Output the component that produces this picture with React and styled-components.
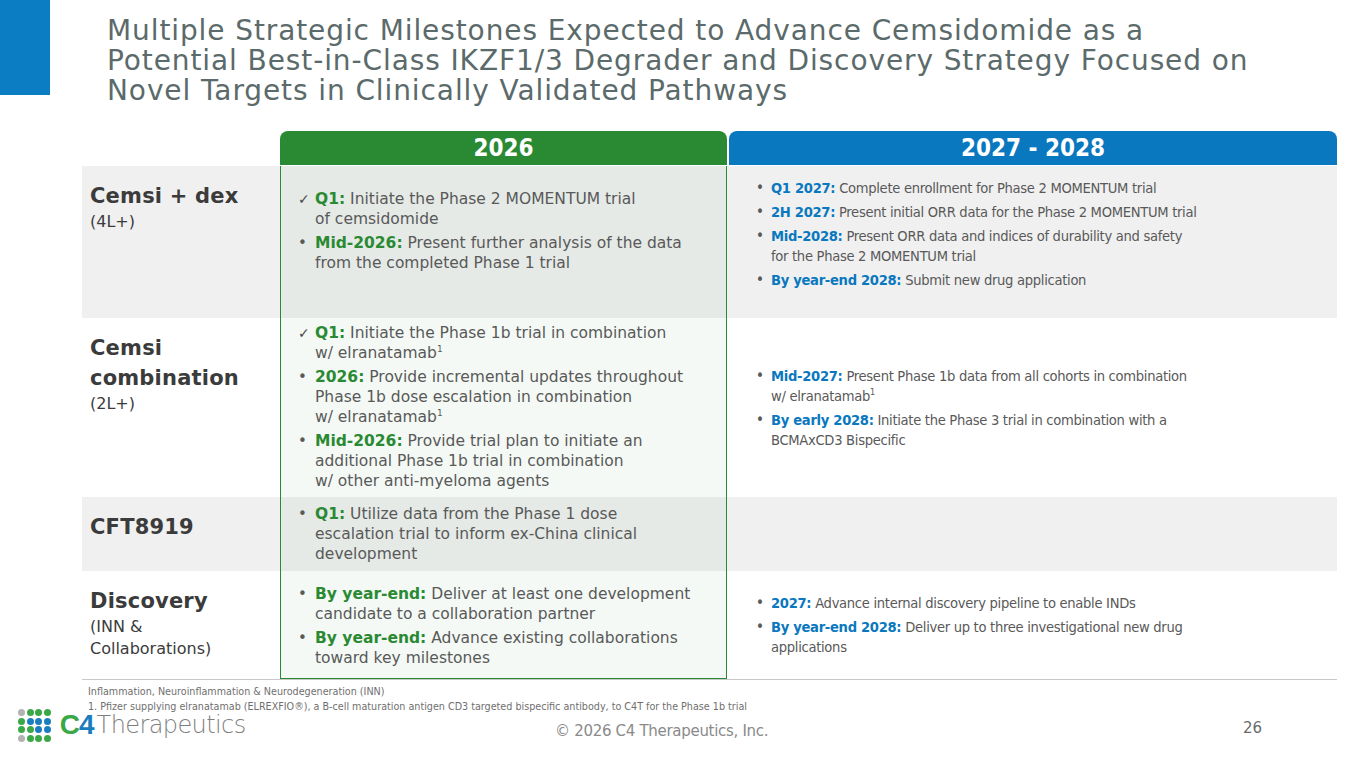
import React from 'react'
import styled, { createGlobalStyle } from 'styled-components'

const GREEN = '#2a8a33';
const BLUE = '#0a78bf';
const TEXT = '#595959';

const GlobalStyle = createGlobalStyle`
  html, body {
    margin: 0;
    padding: 0;
    background: #ffffff;
  }
  body {
    font-family: "DejaVu Sans", "Liberation Sans", sans-serif;
    color: ${TEXT};
  }
`;

const Slide = styled.div`
  width: 1365px;
  height: 768px;
  display: flex;
  flex-direction: column;
  overflow: hidden;
`;

const Header = styled.div`
  display: flex;
  align-items: flex-start;
  gap: 57px;
  height: 131px;
`;

const Tab = styled.div`
  width: 50px;
  height: 95px;
  background: #0b7dc2;
  flex: none;
`;

const Title = styled.h1`
  margin: 16px 0 0;
  font-weight: normal;
  font-size: 28px;
  line-height: 30px;
  color: #5b6a6a;
  letter-spacing: 0.9px;
  white-space: nowrap;
`;

const Table = styled.div`
  margin-left: 82px;
  width: 1255px;
  display: flex;
  flex-direction: column;
  border-bottom: 1px solid #c9c9c9;
`;

const Row = styled.div`
  display: grid;
  grid-template-columns: 198px 449px 608px;
  height: ${({ h }) => h}px;
  background: ${({ shade }) => (shade ? '#f0f0f0' : '#ffffff')};
`;

const YearHead = styled.div`
  display: flex;
  align-items: center;
  justify-content: center;
  height: 34px;
  margin-right: ${({ gapRight }) => (gapRight ? '2px' : '0')};
  border-radius: 8px 8px 0 0;
  background: ${({ color }) => color};
  color: #ffffff;
  font-family: "Liberation Sans Narrow", "DejaVu Sans Condensed", "Liberation Sans", sans-serif;
  font-weight: bold;
  font-size: 24px;
`;

const Label = styled.div`
  padding: 15px 0 0 8px;
  color: #3b3b3b;
`;

const LabelName = styled.div`
  font-weight: bold;
  font-size: 21px;
  line-height: 30px;
  letter-spacing: 0.2px;
`;

const LabelSub = styled.div`
  font-size: 16px;
  line-height: 22px;
`;

const Cell = styled.div`
  display: flex;
  flex-direction: column;
  justify-content: ${({ center }) => (center ? 'center' : 'flex-start')};
  padding: ${({ pad }) => pad || 0}px 0 0 ${({ left }) => left}px;
  margin-right: ${({ gapRight }) => (gapRight ? '2px' : '0')};
  ${({ framed, last }) => framed && `
    background: rgba(42, 138, 51, 0.05);
    border-left: 1.5px solid ${GREEN};
    border-right: 1.5px solid ${GREEN};
    ${last ? `border-bottom: 1.5px solid ${GREEN};` : ''}
  `}
`;

const List = styled.ul`
  list-style: none;
  margin: 0;
  padding: 0;
  display: flex;
  flex-direction: column;
  gap: 4px;
`;

const ItemRow = styled.li`
  display: flex;
  font-family: ${({ narrow }) => (narrow ? '"DejaVu Sans Condensed", "DejaVu Sans", sans-serif' : '"DejaVu Sans", sans-serif')};
  font-size: ${({ narrow }) => (narrow ? '14.6px' : '15.5px')};
  line-height: 20px;
  letter-spacing: ${({ narrow }) => (narrow ? '-0.3px' : '0')};
  white-space: nowrap;
`;

const Marker = styled.span`
  flex: none;
  width: ${({ narrow }) => (narrow ? '15px' : '17px')};
  color: ${({ check }) => (check ? '#4a4a4a' : TEXT)};
  font-size: ${({ check }) => (check ? '14px' : '15px')};
`;

const Key = styled.b`
  color: ${({ tone }) => (tone === 'blue' ? BLUE : GREEN)};
`;

const Sup = styled.sup`
  font-size: 9px;
  line-height: 0;
`;

const Footer = styled.div`
  display: flex;
  flex-direction: column;
`;

const Notes = styled.div`
  padding: 4px 0 0 88px;
  font-size: 9.6px;
  line-height: 15px;
  color: #6f6f6f;
  white-space: nowrap;
`;

const BottomBar = styled.div`
  display: flex;
  align-items: center;
  margin-top: -5px;
  padding-left: 18px;
`;

const Logo = styled.div`
  display: flex;
  align-items: center;
  width: 537px;
`;

const Dots = styled.div`
  display: grid;
  grid-template-columns: repeat(4, 7px);
  gap: 1.6px;
  margin-right: 9px;
`;

const Dot = styled.span`
  width: 7px;
  height: 7px;
  border-radius: 50%;
  background: ${({ c }) => c};
`;

const Brand = styled.span`
  font-family: "Liberation Sans", sans-serif;
  font-weight: bold;
  font-size: 28px;
  letter-spacing: -1px;
  color: ${({ c }) => c};
`;

const BrandName = styled.span`
  font-family: "DejaVu Sans", sans-serif;
  font-weight: 200;
  font-size: 24px;
  letter-spacing: -0.6px;
  color: #7f7f7f;
  margin-left: 3px;
`;

const Copy = styled.div`
  font-size: 15px;
  color: #8a8a8a;
  letter-spacing: -0.3px;
  padding-top: 12px;
`;

const PageNum = styled.div`
  margin-left: auto;
  margin-right: 103px;
  font-size: 15px;
  color: #6a6a6a;
  padding-top: 6px;
`;

const dotColors = [
  '#b3b3b3', '#3aa847', '#3aa847', '#3aa847',
  '#3aa847', '#1a7dc0', '#1a7dc0', '#1a7dc0',
  '#3aa847', '#3aa847', '#1a7dc0', '#1a7dc0',
  '#b3b3b3', '#3aa847', '#3aa847', '#3aa847',
];

const Item = ({ check, tone, narrow, k, children }) => (
  <ItemRow narrow={narrow}>
    <Marker check={check} narrow={narrow}>{check ? '✓' : '•'}</Marker>
    <span>
      <Key tone={tone}>{k}</Key> {children}
    </span>
  </ItemRow>
);

const Now = (props) => <Item tone="green" {...props} />;
const Later = (props) => <Item tone="blue" narrow {...props} />;

export default function App() {
  return (
    <Slide>
      <GlobalStyle />
      <Header>
        <Tab />
        <Title>
          Multiple Strategic Milestones Expected to Advance Cemsidomide as a<br />
          Potential Best-in-Class IKZF1/3 Degrader and Discovery Strategy Focused on<br />
          Novel Targets in Clinically Validated Pathways
        </Title>
      </Header>

      <Table>
        <Row h={35}>
          <div />
          <YearHead color={GREEN} gapRight>2026</YearHead>
          <YearHead color={BLUE}>2027 - 2028</YearHead>
        </Row>

        <Row h={152} shade>
          <Label>
            <LabelName>Cemsi + dex</LabelName>
            <LabelSub>(4L+)</LabelSub>
          </Label>
          <Cell framed gapRight pad={23} left={17}>
            <List>
              <Now check k="Q1:">Initiate the Phase 2 MOMENTUM trial<br />of cemsidomide</Now>
              <Now k="Mid-2026:">Present further analysis of the data<br />from the completed Phase 1 trial</Now>
            </List>
          </Cell>
          <Cell pad={12} left={27}>
            <List>
              <Later k="Q1 2027:">Complete enrollment for Phase 2 MOMENTUM trial</Later>
              <Later k="2H 2027:">Present initial ORR data for the Phase 2 MOMENTUM trial</Later>
              <Later k="Mid-2028:">Present ORR data and indices of durability and safety<br />for the Phase 2 MOMENTUM trial</Later>
              <Later k="By year-end 2028:">Submit new drug application</Later>
            </List>
          </Cell>
        </Row>

        <Row h={179}>
          <Label>
            <LabelName>Cemsi<br />combination</LabelName>
            <LabelSub>(2L+)</LabelSub>
          </Label>
          <Cell framed gapRight pad={5} left={17}>
            <List>
              <Now check k="Q1:">Initiate the Phase 1b trial in combination<br />w/ elranatamab<Sup>1</Sup></Now>
              <Now k="2026:">Provide incremental updates throughout<br />Phase 1b dose escalation in combination<br />w/ elranatamab<Sup>1</Sup></Now>
              <Now k="Mid-2026:">Provide trial plan to initiate an<br />additional Phase 1b trial in combination<br />w/ other anti-myeloma agents</Now>
            </List>
          </Cell>
          <Cell center left={27}>
            <List>
              <Later k="Mid-2027:">Present Phase 1b data from all cohorts in combination<br />w/ elranatamab<Sup>1</Sup></Later>
              <Later k="By early 2028:">Initiate the Phase 3 trial in combination with a<br />BCMAxCD3 Bispecific</Later>
            </List>
          </Cell>
        </Row>

        <Row h={74} shade>
          <Label>
            <LabelName>CFT8919</LabelName>
          </Label>
          <Cell framed gapRight pad={7} left={17}>
            <List>
              <Now k="Q1:">Utilize data from the Phase 1 dose<br />escalation trial to inform ex-China clinical<br />development</Now>
            </List>
          </Cell>
          <Cell />
        </Row>

        <Row h={108}>
          <Label>
            <LabelName>Discovery</LabelName>
            <LabelSub>(INN &amp;<br />Collaborations)</LabelSub>
          </Label>
          <Cell framed last gapRight pad={13} left={17}>
            <List>
              <Now k="By year-end:">Deliver at least one development<br />candidate to a collaboration partner</Now>
              <Now k="By year-end:">Advance existing collaborations<br />toward key milestones</Now>
            </List>
          </Cell>
          <Cell center left={27}>
            <List>
              <Later k="2027:">Advance internal discovery pipeline to enable INDs</Later>
              <Later k="By year-end 2028:">Deliver up to three investigational new drug<br />applications</Later>
            </List>
          </Cell>
        </Row>
      </Table>

      <Footer>
        <Notes>
          Inflammation, Neuroinflammation &amp; Neurodegeneration (INN)<br />
          1. Pfizer supplying elranatamab (ELREXFIO®), a B-cell maturation antigen CD3 targeted bispecific antibody, to C4T for the Phase 1b trial
        </Notes>
        <BottomBar>
          <Logo>
            <Dots>
              {dotColors.map((c, i) => <Dot key={i} c={c} />)}
            </Dots>
            <Brand c="#3aa847">C</Brand>
            <Brand c="#1a7dc0">4</Brand>
            <BrandName>Therapeutics</BrandName>
          </Logo>
          <Copy>© 2026 C4 Therapeutics, Inc.</Copy>
          <PageNum>26</PageNum>
        </BottomBar>
      </Footer>
    </Slide>
  )
}
